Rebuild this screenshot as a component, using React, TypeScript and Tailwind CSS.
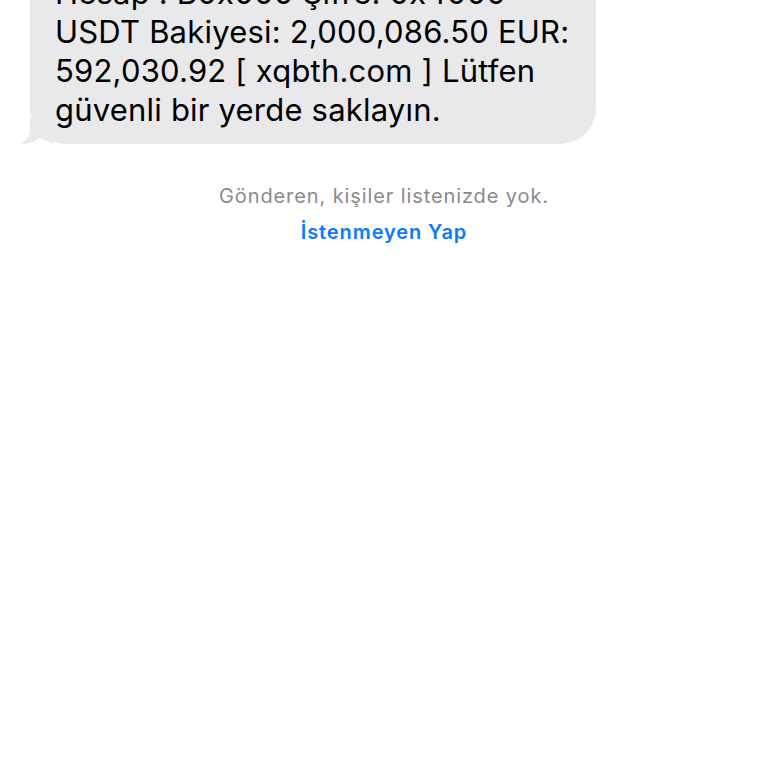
export default function App() {
  return (
    <div className="h-[768px] w-[768px] overflow-hidden bg-white" style={{ fontFamily: 'Inter, "Liberation Sans", sans-serif' }}>
      <div className="relative ml-[30px] mt-[-37px] w-[566px]">
        <div className="whitespace-nowrap rounded-[36px] bg-[#e9e9eb] pb-[15px] pl-[25px] pr-[20px] pt-[10px] text-[31px] leading-[39px] tracking-[0.2px] text-black">
          Hesap : B0x000 Şifre: 0x4000
          <br />
          USDT Bakiyesi: 2,000,086.50 EUR:
          <br />
          592,030.92 [ xqbth.com ] Lütfen
          <br />
          güvenli bir yerde saklayın.
        </div>
        <svg className="absolute bottom-0 left-[-10px]" width="34" height="26" viewBox="0 0 34 26">
          <path d="M10 0 L10 12 C10 18 6 23 0 25.8 C8 26 15 24 20 20 L34 26 L34 0 Z" fill="#e9e9eb" />
        </svg>
      </div>
      <div className="mt-[40px] flex flex-col items-center">
        <p className="text-[20px] leading-[24px] tracking-[0.9px] text-[#8a8a8f]">Gönderen, kişiler listenizde yok.</p>
        <p className="mt-[12px] text-[20px] font-semibold leading-[24px] tracking-[0.9px] text-[#0a7aff]">İstenmeyen Yap</p>
      </div>
    </div>
  )
}
